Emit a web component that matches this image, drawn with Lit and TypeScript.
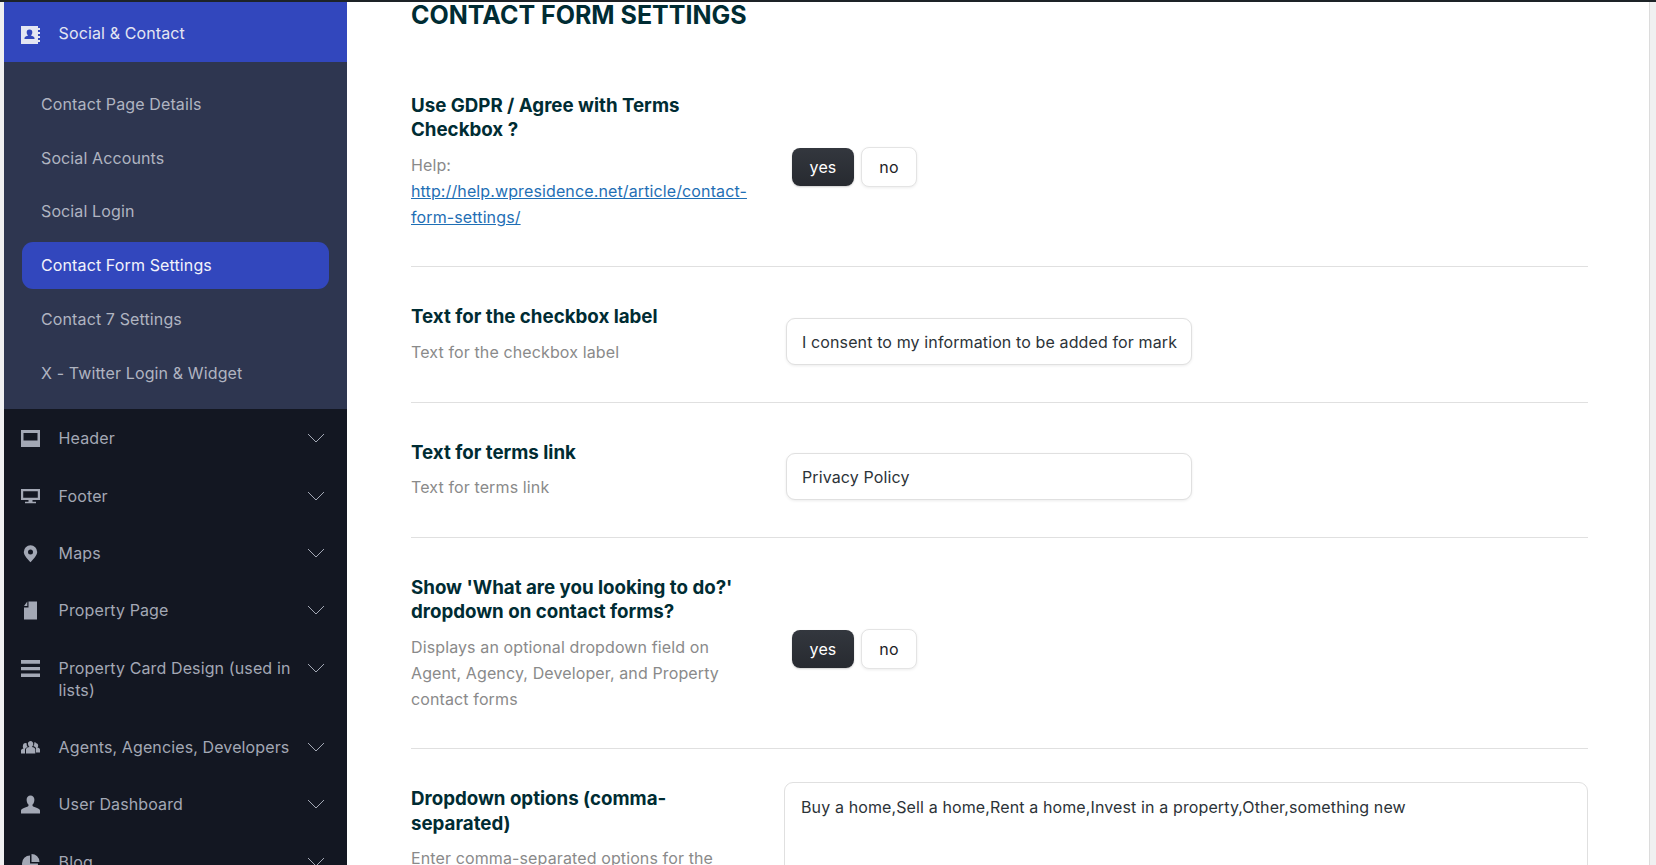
import { LitElement, html, css, svg } from 'lit';
import { customElement } from 'lit/decorators.js';

const icons: Record<string, unknown> = {
  contact: svg`<path fill-rule="evenodd" d="M0 0h17v2h2v2h-2v2h2v2h-2v2h2v2h-2v2h2v2h-2v2H0zM8.500 3.500a2.800 2.800 0 0 0-2.800 3c0 1.300.7 2.400 1.500 3-1.900.4-3.700 1.300-3.700 2.600v.9h10v-.9c0-1.300-1.800-2.200-3.700-2.600.8-.6 1.500-1.700 1.500-3a2.800 2.800 0 0 0-2.800-3z"/>`,
  header: svg`<path fill-rule="evenodd" d="M0 1h19v17H0zM2.500 4V11.500h14V4z"/>`,
  footer: svg`<path fill-rule="evenodd" d="M0 2h19v11h-7.500v1.800H15v1.500H4v-1.500h3.500V13H0zM2.200 4.200V10.800h14.600V4.200z"/>`,
  maps: svg`<path fill-rule="evenodd" d="M9.500 1.300a6.700 6.700 0 0 1 6.700 6.700c0 3.600-4.300 7.600-6.700 10.200C7.100 15.600 2.800 11.600 2.800 8a6.700 6.700 0 0 1 6.700-6.700zm0 4.200a2.500 2.500 0 1 0 0 5 2.500 2.500 0 0 0 0-5z"/>`,
  page: svg`<path d="M7.500 .5H16V18.500H3V6.500H7.500zM3 5L6.300 .5V5z"/>`,
  card: svg`<path d="M0 1h19v3.700H0zM0 7.900h19v3.300H0zM0 14.600h19v3.400H0z"/>`,
  agents: svg`<path d="M9.500 3a2.900 2.900 0 0 1 2.700 3.600c-.2 1.100-.7 1.900-1.400 2.400 1.700.4 3.500 1.100 3.500 2.300V15.500H5v-4.200c0-1.200 1.800-1.900 3.500-2.300-.7-.5-1.200-1.300-1.400-2.400A2.900 2.900 0 0 1 9.500 3zM4.500 5c.5 0 1 .2 1.300.5-.3 1.300.1 2.600.9 3.500-1.400.5-2.700 1.300-2.700 2.500v4H0v-3c0-.9 1.200-1.600 2.600-2-.5-.4-.8-1-.8-1.700C1.800 6 3 5 4.500 5zM14.500 5c1.500 0 2.700 1 2.700 2.800 0 .7-.3 1.300-.8 1.700 1.400.4 2.600 1.100 2.600 2v3h-4v-4c0-1.200-1.300-2-2.700-2.500.8-.9 1.200-2.200.9-3.500.3-.3.8-.5 1.300-.5z"/>`,
  user: svg`<path d="M9.500 .5c2.300 0 3.900 1.900 3.900 4.200 0 2.100-.9 4.100-2 5 0 1.200.3 1.700 2.800 2.600 2.600.9 4.800 1.700 4.800 3.200v3H0v-3c0-1.500 2.200-2.300 4.800-3.200 2.500-.9 2.800-1.400 2.800-2.600-1.100-.9-2-2.900-2-5C5.600 2.400 7.200 .5 9.500 .5z"/>`,
  blog: svg`<path d="M10.500 9V1A8 8 0 0 1 18.500 9zM9 10.500V2.500A8 8 0 1 0 17 10.500z"/>`,
};

const subItems = ['Contact Page Details', 'Social Accounts', 'Social Login', 'Contact Form Settings', 'Contact 7 Settings', 'X - Twitter Login & Widget'];
const navItems = [
  ['header', 'Header'],
  ['footer', 'Footer'],
  ['maps', 'Maps'],
  ['page', 'Property Page'],
  ['card', 'Property Card Design (used in lists)'],
  ['agents', 'Agents, Agencies, Developers'],
  ['user', 'User Dashboard'],
  ['blog', 'Blog'],
];

@customElement('app-root')
export class AppRoot extends LitElement {
  static styles = css`
    :host {
      display: block;
      height: 865px;
      overflow: hidden;
      background: #fff;
      font-family: Inter, "Liberation Sans", sans-serif;
      letter-spacing: 0.12px;
    }
    .topbar { height: 2px; background: #1d2327; }
    .layout { display: flex; height: 863px; overflow: hidden; }
    .edge { width: 4px; flex: none; background: #f0f0f1; }
    .sidebar { width: 343px; flex: none; background: #131722; color: #a7aaad; }
    .head {
      height: 60px;
      box-sizing: border-box;
      padding-top: 2px;
      display: flex;
      align-items: center;
      background: #3247bd;
      color: #e4e6f2;
      font-size: 16px;
    }
    .icon { width: 19px; height: 19px; flex: none; margin-left: 16.600px; margin-right: 19px; fill: currentColor; display: block; }
    .head .icon { margin-top: 4px; }
    .sub { background: #2e3650; padding: 18.300px 18px 13.200px 18px; display: flex; flex-direction: column; gap: 6.800px; }
    .sub a { height: 47px; padding-left: 19px; display: flex; align-items: center; border-radius: 11px; font-size: 16px; color: #b0b4c1; }
    .sub a.active { background: #3247bd; color: #f2f3fb; }
    .nav-item { display: flex; align-items: flex-start; padding: 17.700px 0; font-size: 16px; line-height: 22px; color: #a3a8b5; }
    .nav-item .icon { margin-top: 2px; }
    .nav-item span { width: 236px; flex: none; }
    .chev { width: 18px; height: 10px; margin-left: 12.400px; margin-top: 6px; fill: none; stroke: currentColor; stroke-width: 1; flex: none; }
    main { flex: 1; min-width: 0; padding: 0 61px 0 64px; color: #002c33; }
    h1 { margin: 0; padding-bottom: 28px; font-size: 25px; line-height: 26px; font-weight: 700; text-transform: uppercase; letter-spacing: 0; }
    .row { display: flex; align-items: center; padding: 37.800px 0 36.500px; border-bottom: 1px solid #e0e0e0; }
    .left { width: 340px; flex: none; }
    .title { font-size: 18.720px; line-height: 24.500px; font-weight: 700; letter-spacing: 0; }
    .help { margin-top: 9px; font-size: 16px; line-height: 26px; color: #8a8a8a; }
    .help a { color: #1f6fb5; text-decoration: underline; }
    .toggle { display: flex; align-items: center; gap: 7px; margin-left: 41px; margin-top: 10px; }
    .toggle div { display: flex; align-items: center; justify-content: center; box-sizing: border-box; border-radius: 8px; font-size: 16px; }
    .yes { width: 62px; height: 38px; background: linear-gradient(#33373e, #272a30); color: #fff; box-shadow: 0 1px 2px rgba(0, 0, 0, 0.2); }
    .no { width: 56px; height: 40px; background: #fff; color: #1d2327; border: 1px solid #e4e4e4; box-shadow: 0 1px 3px rgba(0, 0, 0, 0.08); }
    .input {
      width: 406px;
      height: 47px;
      box-sizing: border-box;
      margin-left: 35px;
      margin-top: 13px;
      padding: 0 15px;
      display: flex;
      align-items: center;
      border: 1px solid #e0e0e0;
      border-radius: 9px;
      box-shadow: 0 1px 3px rgba(0, 0, 0, 0.08);
      font-size: 16px;
      color: #2c3338;
      white-space: nowrap;
      overflow: hidden;
      background: #fff;
    }
    .last { display: flex; align-items: flex-start; padding-top: 33px; }
    .last .left { padding-top: 5px; }
    .area {
      flex: 1;
      height: 200px;
      box-sizing: border-box;
      margin-left: 33px;
      padding: 12px 16px;
      border: 1px solid #e0e0e0;
      border-radius: 9px;
      font-size: 16px;
      line-height: 24px;
      color: #2c3338;
    }
    .scroll { width: 6px; flex: none; background: #f0f0f1; border-left: 1px solid #dcdcdc; }
  `;

  render() {
    return html`
      <div class="topbar"></div>
      <div class="layout">
        <div class="edge"></div>
        <aside class="sidebar">
          <div class="head">
            <svg class="icon" viewBox="0 0 19 19">${icons.contact}</svg>
            Social &amp; Contact
          </div>
          <div class="sub">
            ${subItems.map((s) => html`<a class=${s === 'Contact Form Settings' ? 'active' : ''}>${s}</a>`)}
          </div>
          ${navItems.map(
            ([icon, label]) => html`
              <div class="nav-item">
                <svg class="icon" viewBox="0 0 19 19">${icons[icon]}</svg>
                <span>${label}</span>
                <svg class="chev" viewBox="0 0 18 10"><path d="M1 1l8 8 8-8" /></svg>
              </div>
            `,
          )}
        </aside>
        <main>
          <h1>Contact Form Settings</h1>
          <section class="row">
            <div class="left">
              <div class="title">Use GDPR / Agree with Terms Checkbox ?</div>
              <div class="help">Help: <a>http://help.wpresidence.net/article/contact-form-settings/</a></div>
            </div>
            <div class="toggle"><div class="yes">yes</div><div class="no">no</div></div>
          </section>
          <section class="row">
            <div class="left">
              <div class="title">Text for the checkbox label</div>
              <div class="help">Text for the checkbox label</div>
            </div>
            <div class="input">I consent to my information to be added for mark</div>
          </section>
          <section class="row">
            <div class="left">
              <div class="title">Text for terms link</div>
              <div class="help">Text for terms link</div>
            </div>
            <div class="input">Privacy Policy</div>
          </section>
          <section class="row">
            <div class="left">
              <div class="title">Show 'What are you looking to do?' dropdown on contact forms?</div>
              <div class="help">Displays an optional dropdown field on Agent, Agency, Developer, and Property contact forms</div>
            </div>
            <div class="toggle"><div class="yes">yes</div><div class="no">no</div></div>
          </section>
          <section class="last">
            <div class="left">
              <div class="title">Dropdown options (comma-separated)</div>
              <div class="help">Enter comma-separated options for the dropdown</div>
            </div>
            <div class="area">Buy a home,Sell a home,Rent a home,Invest in a property,Other,something new</div>
          </section>
        </main>
        <div class="scroll"></div>
      </div>
    `;
  }
}
